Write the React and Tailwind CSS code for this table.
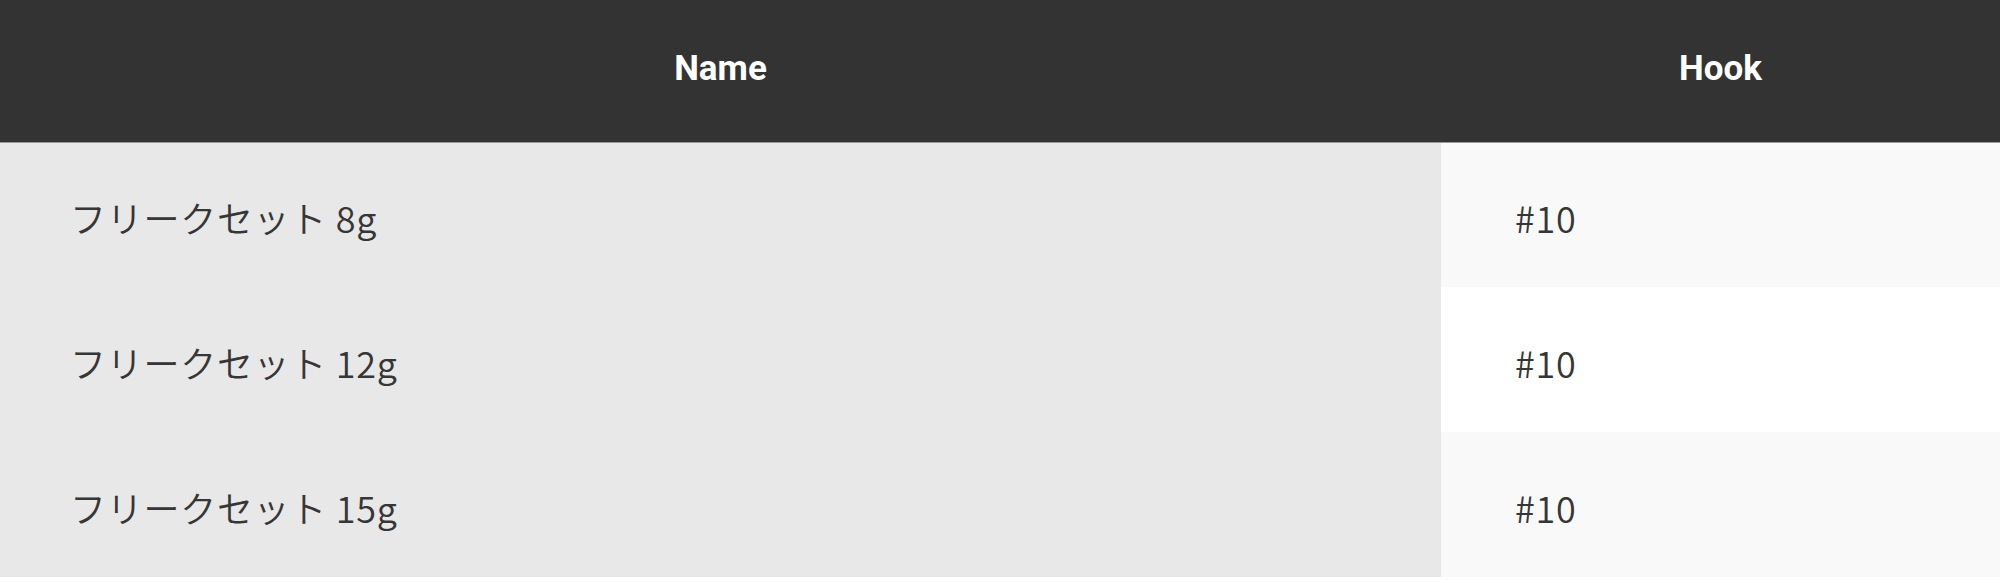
const rows = [
    { name: "フリークセット 8g", hook: "#10" },
    { name: "フリークセット 12g", hook: "#10" },
    { name: "フリークセット 15g", hook: "#10" },
];

const App = () => {
    return (
        <div className="w-[2000px] h-[582px] bg-white overflow-hidden">
            <table className="w-full border-collapse table-fixed">
                <thead>
                    <tr className="h-[142px] bg-[#333333] border-b border-[#9a9a9a]">
                        <th className="w-[1441px] pb-[4px] text-white text-[35px] font-bold font-['Roboto',sans-serif] text-center">Name</th>
                        <th className="pb-[4px] text-white text-[35px] font-bold font-['Roboto',sans-serif] text-center">Hook</th>
                    </tr>
                </thead>
                <tbody className="font-['Noto_Sans_CJK_JP','Noto_Sans',sans-serif] font-[350] text-[#363636] text-[36px] tracking-[0.02em]">
                    {rows.map((row, i) => (
                        <tr key={i} className="h-[145px]">
                            <td className="bg-[#e8e8e8] pl-[70px] pt-[4px] align-middle">{row.name}</td>
                            <td className={`${i % 2 === 0 ? "bg-[#f9f9f9]" : "bg-white"} pl-[74px] pt-[4px] align-middle`}>{row.hook}</td>
                        </tr>
                    ))}
                </tbody>
            </table>
        </div>
    )
}

export default App;
